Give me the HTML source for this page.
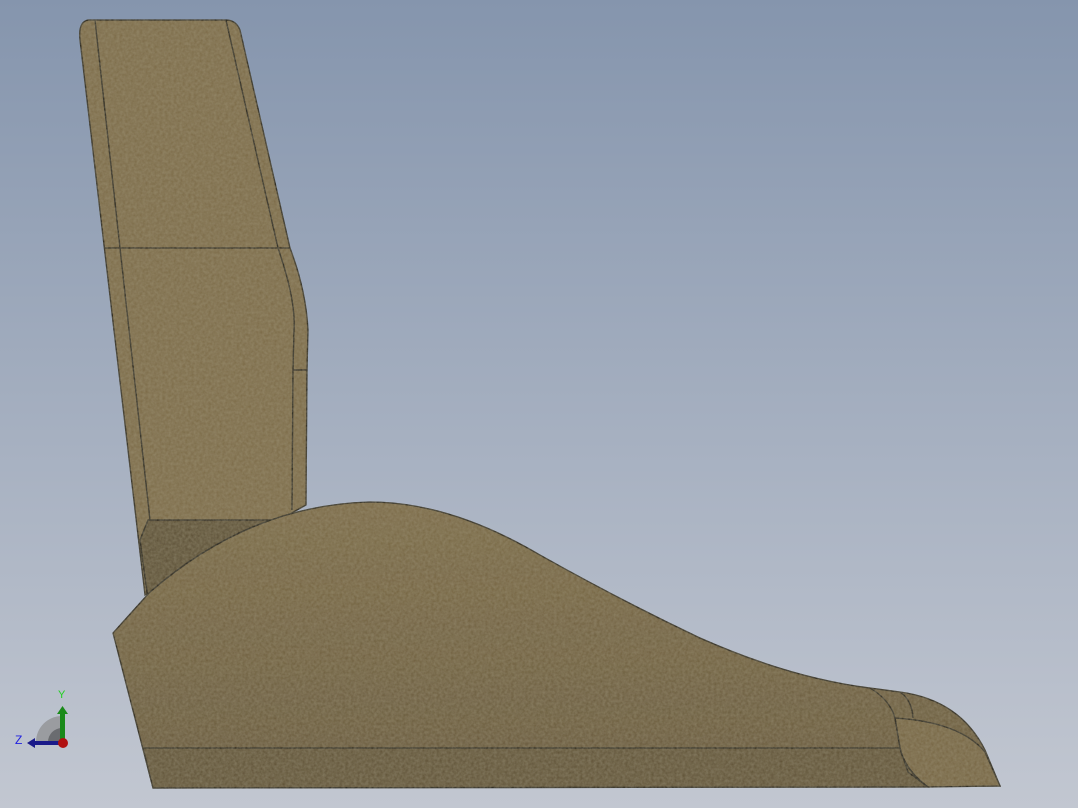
<!DOCTYPE html><html><head><style>html,body{margin:0;padding:0;width:1078px;height:808px;overflow:hidden}</style></head><body>
<svg width="1078" height="808" viewBox="0 0 1078 808" xmlns="http://www.w3.org/2000/svg">
<defs>
<linearGradient id="bg" x1="0" y1="0" x2="0" y2="1"><stop offset="0" stop-color="#8595ad"/><stop offset="1" stop-color="#c2c7d1"/></linearGradient>
<linearGradient id="seat" x1="0" y1="0" x2="0" y2="1"><stop offset="0" stop-color="#7a6945"/><stop offset="1" stop-color="#655638"/></linearGradient>
<filter id="tex"><feTurbulence type="fractalNoise" baseFrequency="0.35" numOctaves="2" result="n"/><feColorMatrix in="n" type="matrix" values="0 0 0 0 0.5 0 0 0 0 0.45 0 0 0 0 0.3 0 0 0 0.3 0" result="c"/><feComposite in="c" in2="SourceGraphic" operator="in" result="t"/><feMerge><feMergeNode in="SourceGraphic"/><feMergeNode in="t"/></feMerge></filter>
</defs>
<rect width="1078" height="808" fill="url(#bg)"/>
<g stroke="#000" stroke-width="1.3" filter="url(#tex)">
<path d="M88 20 L226 20 Q236 20 240 30 L290 248 Q306 290 308 330 L307 370 L306 505 L145 595 L80 40 Q78 22 88 20 Z" fill="#7b6a46"/>
<path d="M95 20 L120 248 L150 520" fill="none"/>
<path d="M226 20 L278 248 Q296 300 294 330 L293 370 L292 510" fill="none"/>
<path d="M105 248 L290 248" fill="none"/>
<path d="M293 370 L307 370" fill="none"/>
<path d="M148 520 L300 520 L300 560 L148 600 L140 540 Z" fill="#5a4d33"/>
<path d="M113 633 L150 592 Q250 505 370 502 Q450 502 540 555 Q620 600 700 638 Q790 678 870 688 L900 692 Q960 700 985 750 L1000 786 L153 788 Z" fill="url(#seat)"/>
<path d="M143 748 L900 748 L908 772 L928 787 L153 788 Z" fill="#5f5135"/>
<path d="M895 718 Q960 722 985 752 L1000 786 L928 787 Q905 770 900 748 Z" fill="#766543"/>
<path d="M870 688 Q890 700 895 718 L900 748 Q905 770 928 787" fill="none"/>
<path d="M900 692 Q912 700 913 718" fill="none"/>
</g>
<path d="M36 742 A26 26 0 0 1 62 716 L62 742 Z" fill="#9a9ca0"/>
<path d="M48 742 A14 14 0 0 1 62 728 L62 742 Z" fill="#6a6c70"/>
<rect x="60" y="712" width="5" height="30" fill="#1a8a1a"/>
<polygon points="57,714 62.5,706 68,714" fill="#1a8a1a"/>
<rect x="34" y="741" width="28" height="4" fill="#1a1a8a"/>
<polygon points="35,738 27,743 35,748" fill="#1a1a8a"/>
<circle cx="63" cy="743" r="5" fill="#b01010"/>
<text x="58" y="698" font-family="Liberation Sans,sans-serif" font-size="11" fill="#20d020">Y</text>
<text x="15" y="744" font-family="Liberation Sans,sans-serif" font-size="12" fill="#2020e0">Z</text>
</svg>
</body></html>
